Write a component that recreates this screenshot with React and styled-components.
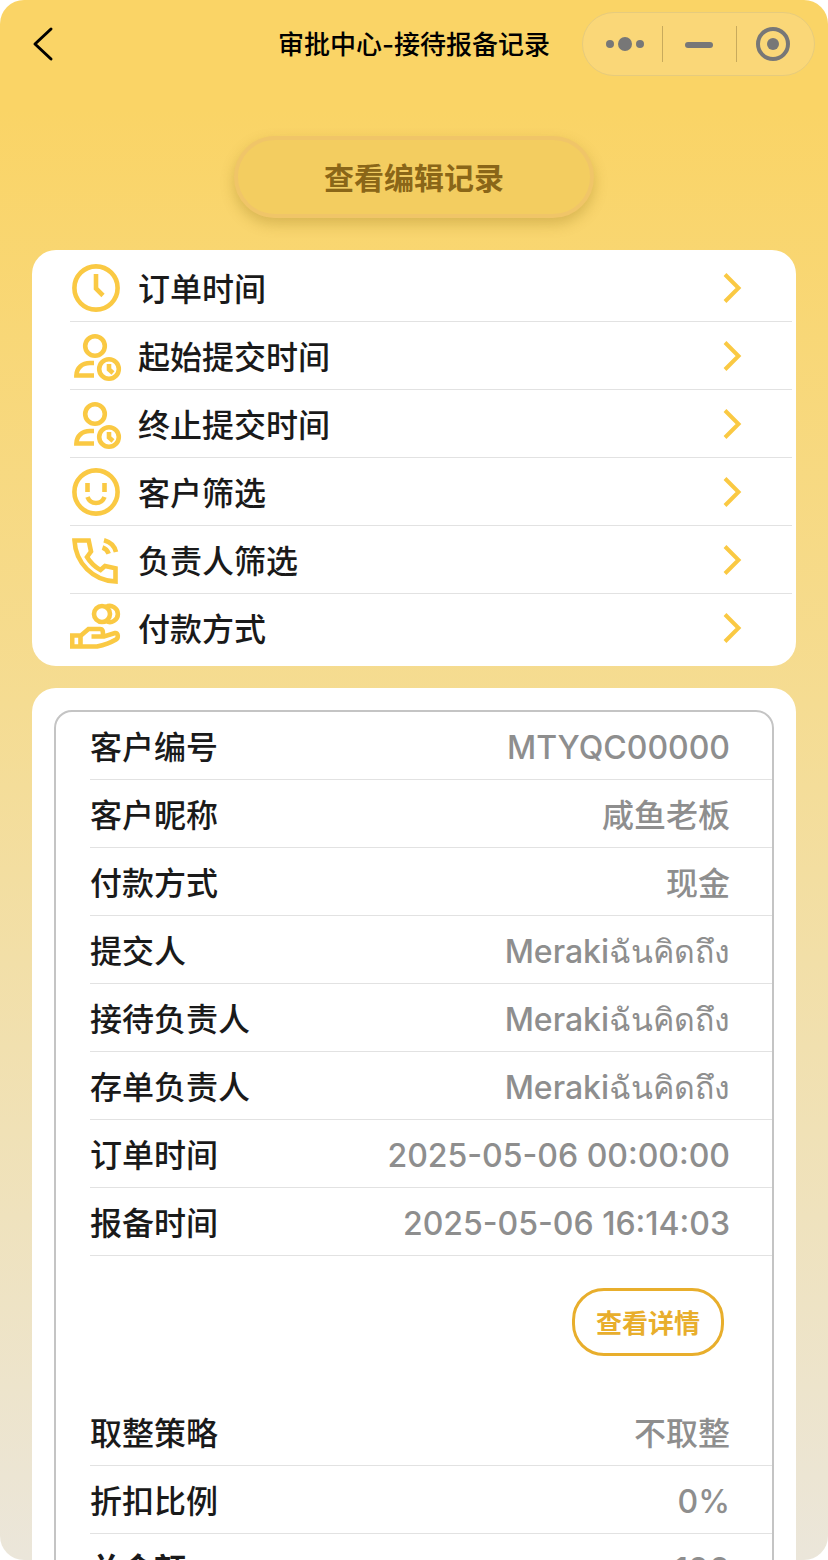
import React from 'react';
import styled, { createGlobalStyle } from 'styled-components';

const filters = [
  { label: '订单时间', icon: 'clock' },
  { label: '起始提交时间', icon: 'userClock' },
  { label: '终止提交时间', icon: 'userClock' },
  { label: '客户筛选', icon: 'smile' },
  { label: '负责人筛选', icon: 'phone' },
  { label: '付款方式', icon: 'pay' },
];

const orderInfo = [
  ['客户编号', 'MTYQC00000'],
  ['客户昵称', '咸鱼老板'],
  ['付款方式', '现金'],
  ['提交人', 'Merakiฉันคิดถึง'],
  ['接待负责人', 'Merakiฉันคิดถึง'],
  ['存单负责人', 'Merakiฉันคิดถึง'],
  ['订单时间', '2025-05-06 00:00:00'],
  ['报备时间', '2025-05-06 16:14:03'],
];

const priceInfo = [
  ['取整策略', '不取整'],
  ['折扣比例', '0%'],
  ['总金额', '100', true],
];

const icons = {
  clock: (
    <>
      <circle cx="26" cy="26" r="21.6" />
      <path d="M26 12v14.5l7 7" />
    </>
  ),
  userClock: (
    <>
      <circle cx="25" cy="16" r="9.8" />
      <path d="M24 33h-4C12 33 6.5 38 6.4 45.5H24" />
      <circle cx="39" cy="39" r="9.8" />
      <path d="M39 34v5.5l4 3.5" />
    </>
  ),
  smile: (
    <>
      <circle cx="26" cy="26" r="21.6" />
      <path d="M17.5 17v9M34.5 17v9M17.5 31c1.5 4 4.5 6 8.5 6s7-2 8.5-6" />
    </>
  ),
  phone: (
    <>
      <path d="M4.5 6.5H18.7L21 17.5L17 23C20 28 25 33 30.5 36L35 32L45.5 34.3V47.5C23 46.5 5.5 29 4.5 6.5z" />
      <path d="M34 6.3C40.5 8 44.5 12 46 18M32.5 13.5C35.5 14.5 37.5 16.5 38.7 19.7" />
    </>
  ),
  pay: (
    <>
      <circle cx="32" cy="12" r="8" />
      <path d="M36 5A8 8 0 1 1 36 19" />
      <path d="M10.5 33.5V44.5M21.5 34.5H34L45 31C48.5 30.5 48.5 36 46 37.5C40 41 34 43 27 44.5H2.2V33.5H11L18.5 27H30C33 27 33 29.5 33 34" />
    </>
  ),
};

const App = () => {
  return (
    <Screen>
      <GlobalStyle />
      <Header>
        <BackButton aria-label="返回">
          <svg width="22" height="36" viewBox="0 0 22 36">
            <path d="M19 3L3 18l16 15" />
          </svg>
        </BackButton>
        <Title>审批中心-接待报备记录</Title>
        <Capsule>
          <CapsuleButton aria-label="更多">
            <svg width="38" height="38" viewBox="0 0 38 38">
              <circle cx="4" cy="19" r="4" />
              <circle cx="19" cy="19" r="7" />
              <circle cx="34" cy="19" r="4" />
            </svg>
          </CapsuleButton>
          <CapsuleButton aria-label="最小化">
            <svg width="28" height="38" viewBox="0 0 28 38">
              <rect y="17" width="28" height="6" rx="3" />
            </svg>
          </CapsuleButton>
          <CapsuleButton aria-label="关闭">
            <svg width="34" height="34" viewBox="0 0 34 34">
              <circle cx="17" cy="17" r="15" fill="none" stroke="currentColor" strokeWidth="4" />
              <circle cx="17" cy="17" r="6" />
            </svg>
          </CapsuleButton>
        </Capsule>
      </Header>
      <Content>
        <HistoryButton>查看编辑记录</HistoryButton>
        <FilterCard>
          {filters.map((item) => (
            <FilterRow key={item.label}>
              <FilterIcon viewBox="0 0 52 52">{icons[item.icon]}</FilterIcon>
              <FilterLabel>{item.label}</FilterLabel>
              <Chevron viewBox="0 0 20 32">
                <path d="M3 2.5L16.5 16L3 29.5" />
              </Chevron>
            </FilterRow>
          ))}
        </FilterCard>
        <RecordCard>
          <Record>
            <InfoList rows={orderInfo} />
            <Actions>
              <DetailButton>查看详情</DetailButton>
            </Actions>
            <InfoList rows={priceInfo} />
          </Record>
        </RecordCard>
      </Content>
    </Screen>
  );
};

const InfoList = ({ rows }) => (
  <List>
    {rows.map(([name, value, strong]) => (
      <InfoRow key={name} $strong={strong}>
        <dt>{name}</dt>
        <dd>{value}</dd>
      </InfoRow>
    ))}
  </List>
);

export default App;

const GlobalStyle = createGlobalStyle`
  * {
    box-sizing: border-box;
  }
  body {
    margin: 0;
    background: #fff;
    font-family: Inter, "Noto Sans CJK SC", "Noto Sans", sans-serif;
    color: #1a1a1a;
  }
  button {
    font-family: inherit;
    cursor: pointer;
  }
`;

const Screen = styled.main`
  height: 100vh;
  display: flex;
  flex-direction: column;
  overflow: hidden;
  border-radius: 24px;
  background: linear-gradient(#fad466 0%, #fad466 7%, #f5dc92 45%, #ebe6da 100%);
`;

const Header = styled.header`
  display: grid;
  grid-template-columns: 1fr auto 1fr;
  align-items: center;
  padding: 12px 13px;
`;

const BackButton = styled.button`
  justify-self: start;
  display: flex;
  padding: 0 19px;
  border: none;
  background: none;
  svg {
    fill: none;
    stroke: #000;
    stroke-width: 3;
    stroke-linecap: round;
    stroke-linejoin: round;
  }
`;

const Title = styled.h1`
  margin: 0;
  padding-top: 2px;
  font-size: 26px;
  line-height: 36px;
  font-weight: 500;
  color: #000;
`;

const Capsule = styled.div`
  justify-self: end;
  display: flex;
  align-items: center;
  height: 64px;
  padding: 0 4px 0 5px;
  border: 1px solid #e6cb7d;
  border-radius: 32px;
  background: #fad778;
`;

const CapsuleButton = styled.button`
  display: flex;
  align-items: center;
  justify-content: center;
  width: 74px;
  height: 36px;
  padding: 0;
  border: none;
  background: none;
  color: #777;
  fill: currentColor;
  & + & {
    padding-right: 2px;
    border-left: 1px solid #c8aa5c;
  }
`;

const Content = styled.div`
  flex: 1;
  min-height: 0;
  display: flex;
  flex-direction: column;
  padding: 48px 32px 0;
  overflow-y: auto;
  scrollbar-width: none;
`;

const HistoryButton = styled.button`
  flex-shrink: 0;
  align-self: center;
  width: 360px;
  height: 82px;
  padding: 0 0 2px;
  margin-bottom: 32px;
  border: 4px solid #f0c568;
  border-radius: 41px;
  background: #f3cd60;
  box-shadow: 0 6px 14px rgba(140, 110, 20, 0.3);
  font-size: 30px;
  font-weight: 700;
  color: #8a6618;
`;

const Card = styled.section`
  flex-shrink: 0;
  border-radius: 24px;
  background: #fff;
`;

const FilterCard = styled(Card)`
  padding: 4px 4px 4px 38px;
  margin-bottom: 22px;
`;

const FilterRow = styled.button`
  display: flex;
  align-items: center;
  gap: 16px;
  width: 100%;
  height: 68px;
  padding: 0 50px 0 0;
  border: none;
  border-bottom: 1px solid #e2e2e2;
  background: none;
  color: inherit;
  text-align: left;
  &:last-child {
    border-bottom-color: transparent;
  }
`;

const FilterIcon = styled.svg`
  width: 52px;
  height: 52px;
  fill: none;
  stroke: #fac943;
  stroke-width: 4.6;
`;

const FilterLabel = styled.span`
  flex: 1;
  padding-top: 4px;
  font-size: 32px;
  line-height: 44px;
  font-weight: 500;
`;

const Chevron = styled.svg`
  width: 20px;
  height: 32px;
  fill: none;
  stroke: #fac943;
  stroke-width: 4;
`;

const RecordCard = styled(Card)`
  padding: 22px;
`;

const Record = styled.article`
  border: 2px solid #c4c4c4;
  border-radius: 18px;
`;

const List = styled.dl`
  margin: 0;
  padding-left: 34px;
`;

const InfoRow = styled.div`
  display: flex;
  align-items: center;
  justify-content: space-between;
  height: 68px;
  padding: 4px 42px 0 0;
  border-bottom: 1px solid #e2e2e2;
  font-size: 32px;
  line-height: 44px;
  dt {
    font-weight: ${({ $strong }) => ($strong ? 700 : 500)};
  }
  dd {
    margin: 0;
    color: #8e8e8e;
    font-weight: ${({ $strong }) => ($strong ? 600 : 500)};
  }
`;

const Actions = styled.div`
  display: flex;
  justify-content: flex-end;
  padding: 32px 48px 42px;
`;

const DetailButton = styled.button`
  width: 152px;
  height: 68px;
  padding: 0 0 2px;
  border: 3px solid #e8ae2c;
  border-radius: 32px;
  background: #fff;
  font-size: 26px;
  font-weight: 700;
  color: #e8ae2c;
`;
